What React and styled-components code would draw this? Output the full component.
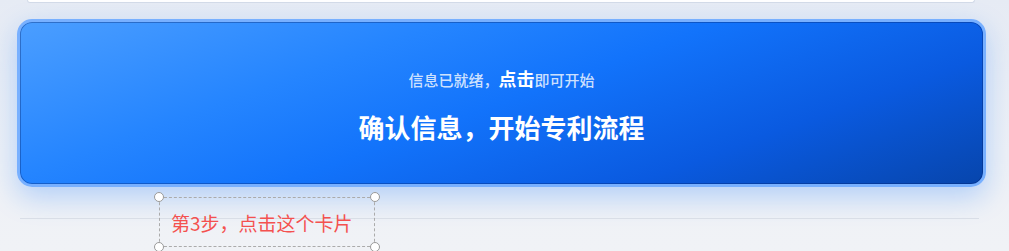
import styled, { createGlobalStyle } from 'styled-components';

const GlobalStyle = createGlobalStyle`
  html, body {
    margin: 0;
    padding: 0;
    background: #eef1f6;
    font-family: "Noto Sans CJK SC", "Noto Sans", sans-serif;
  }
`;

const Page = styled.div`
  width: 1009px;
  height: 251px;
  overflow: hidden;
  background: linear-gradient(180deg, #e6ebf4 0%, #eef1f6 60%, #f0f2f6 100%);
`;

const PrevCard = styled.div`
  height: 2px;
  margin: 0 34px 0 27px;
  background: #fff;
  border: 1px solid #d3dbe8;
  border-top: none;
  border-radius: 0 0 8px 8px;
`;

const StartCard = styled.div`
  margin: 16px 23px 0 17px;
  padding-top: 3px;
  box-sizing: border-box;
  height: 168px;
  border: 3px solid #78b0ff;
  border-radius: 15px;
  background: linear-gradient(160deg, #4b9eff 0%, #2585ff 30%, #1273fb 50%, #0a5ae0 75%, #0745ac 100%);
  box-shadow: inset 0 0 0 1px rgba(0, 30, 100, 0.35), 0 10px 28px rgba(22, 119, 255, 0.28);
  display: flex;
  flex-direction: column;
  align-items: center;
  justify-content: center;
  gap: 18px;
  cursor: pointer;
`;

const Hint = styled.div`
  font-size: 15px;
  font-weight: 500;
  color: rgba(255, 255, 255, 0.8);
  line-height: 24px;
  display: flex;
  align-items: baseline;

  strong {
    font-size: 18px;
    color: #fff;
    font-weight: 700;
  }
`;

const Title = styled.div`
  font-size: 26px;
  font-weight: 700;
  color: #fff;
  line-height: 34px;
`;

const Footer = styled.div`
  position: relative;
  height: 64px;
  padding-top: 31px;
  margin: 0 30px 0 20px;
`;

const Divider = styled.div`
  height: 1px;
  background: #d9dee7;
`;

const Annotation = styled.div`
  position: absolute;
  left: 139px;
  top: 10px;
  width: 216px;
  height: 50px;
  border: 1.5px dashed #ababab;
  box-sizing: border-box;
  display: flex;
  align-items: center;
  padding-left: 11px;
  font-size: 19px;
  color: #f4514f;
`;

const Handle = styled.span`
  position: absolute;
  width: 8px;
  height: 8px;
  border-radius: 50%;
  background: #fff;
  border: 1.5px solid #9a9a9a;
  ${p => (p.$top ? 'top: -6px;' : 'bottom: -6px;')}
  ${p => (p.$left ? 'left: -6px;' : 'right: -6px;')}
`;

export default function App() {
  return (
    <Page>
      <GlobalStyle />
      <PrevCard />
      <StartCard>
        <Hint>
          信息已就绪，<strong>点击</strong>即可开始
        </Hint>
        <Title>确认信息，开始专利流程</Title>
      </StartCard>
      <Footer>
        <Divider />
        <Annotation>
          第3步，点击这个卡片
          <Handle $top $left />
          <Handle $top />
          <Handle $left />
          <Handle />
        </Annotation>
      </Footer>
    </Page>
  );
}
